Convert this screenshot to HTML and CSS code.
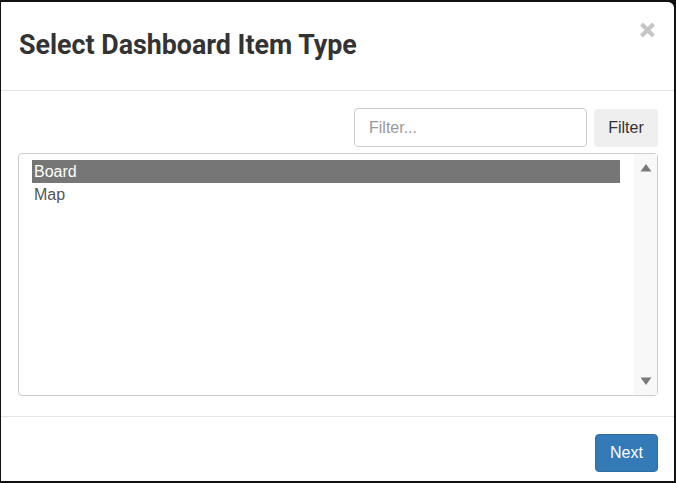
FILE: index.html
```html
<!DOCTYPE html>
<html>
<head>
<meta charset="utf-8">
<link rel="stylesheet" href="styles.css">
</head>
<body>
<div class="frame">
  <div class="modal">
    <div class="modal-header">
      <h4 class="modal-title">Select Dashboard Item Type</h4>
      <button class="close" aria-label="Close">
        <svg width="17" height="16" viewBox="0 0 17 16"><path d="M2.5 2 L14.5 14 M14.5 2 L2.5 14" stroke="#c6c6c6" stroke-width="4.2" stroke-linecap="butt"/></svg>
      </button>
    </div>
    <div class="modal-body">
      <div class="filter-row">
        <input class="filter-input" type="text" placeholder="Filter...">
        <button class="btn btn-default">Filter</button>
      </div>
      <div class="listbox">
        <div class="options">
          <div class="option selected">Board</div>
          <div class="option">Map</div>
        </div>
        <div class="scrollbar">
          <svg width="12" height="9" viewBox="0 0 12 9"><path d="M6 1 L11.5 8.5 L0.5 8.5 Z" fill="#7a7a7a"/></svg>
          <svg width="12" height="9" viewBox="0 0 12 9"><path d="M0.5 0.5 L11.5 0.5 L6 8 Z" fill="#7a7a7a"/></svg>
        </div>
      </div>
    </div>
    <div class="modal-footer">
      <button class="btn btn-primary">Next</button>
    </div>
  </div>
</div>
</body>
</html>
```

FILE: styles.css
```css
html, body {
  margin: 0;
  padding: 0;
  background: #3a3a3a;
  font-family: "Liberation Sans", Arial, sans-serif;
  font-size: 16px;
  color: #333;
}
.frame {
  width: 676px;
  height: 483px;
  box-sizing: border-box;
  padding: 2px 2px 2px 1px;
  background: #111;
}
.modal {
  height: 100%;
  background: #fff;
  border-top-right-radius: 6px;
  display: flex;
  flex-direction: column;
}
.modal-header {
  height: 89px;
  flex: none;
  box-sizing: border-box;
  border-bottom: 1px solid #e5e5e5;
  display: flex;
  align-items: flex-start;
  justify-content: space-between;
  padding: 0 18px 0 18px;
}
.modal-title {
  margin: 0;
  margin-top: 28px;
  font-family: Roboto, "Liberation Sans", sans-serif;
  font-weight: 700;
  font-size: 26.8px;
  line-height: 30px;
  color: #333;
}
.close {
  margin-top: 20px;
  padding: 0;
  border: 0;
  background: transparent;
  width: 17px;
  height: 16px;
  display: flex;
}
.modal-body {
  flex: 1;
  padding: 17px 16px 20px 17px;
  display: flex;
  flex-direction: column;
  gap: 6px;
}
.filter-row {
  display: flex;
  justify-content: flex-end;
  gap: 7px;
  height: 39px;
}
.filter-input {
  width: 233px;
  height: 39px;
  box-sizing: border-box;
  border: 1px solid #ccc;
  border-radius: 4px;
  padding: 0 14px;
  font-family: "Liberation Sans", Arial, sans-serif;
  font-size: 16px;
  color: #555;
  outline: none;
}
.filter-input::placeholder {
  color: #999;
}
.btn {
  border: 1px solid transparent;
  border-radius: 4px;
  font-family: "Liberation Sans", Arial, sans-serif;
  font-size: 16px;
  padding: 0 12px;
  height: 38px;
  cursor: pointer;
}
.btn-default {
  width: 64px;
  margin-top: 1px;
  background: #efefef;
  color: #333;
}
.btn-primary {
  width: 63px;
  background: #337ab7;
  border-color: #2e6da4;
  color: #fff;
}
.listbox {
  flex: 1;
  box-sizing: border-box;
  border: 1px solid #ccc;
  border-radius: 4px;
  display: flex;
}
.options {
  flex: 1;
  padding: 6px 14px 0 13px;
}
.option {
  height: 23px;
  line-height: 23px;
  padding-left: 2px;
  color: #555;
}
.option.selected {
  background: #767676;
  color: #fff;
}
.scrollbar {
  width: 23px;
  background: #f8f8f8;
  display: flex;
  flex-direction: column;
  justify-content: space-between;
  align-items: center;
  padding: 9px 0 9px 0;
}
.modal-footer {
  flex: none;
  box-sizing: border-box;
  border-top: 1px solid #e5e5e5;
  display: flex;
  justify-content: flex-end;
  align-items: flex-start;
  padding: 17px 16px 9px 0;
}
```
